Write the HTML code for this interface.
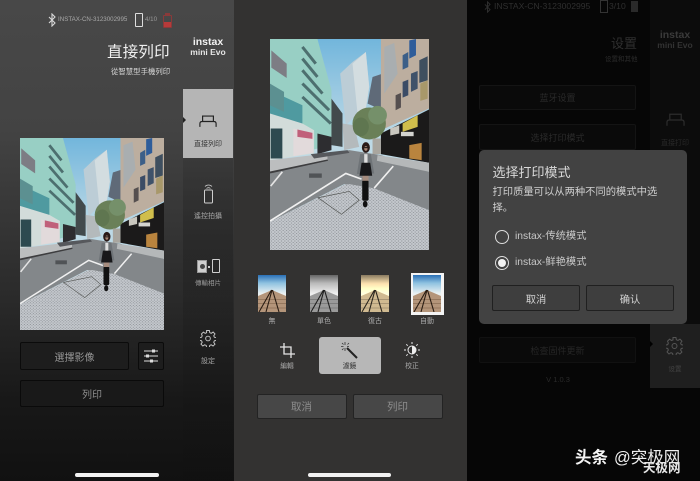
<!DOCTYPE html>
<html lang="zh"><head><meta charset="utf-8">
<style>
*{margin:0;padding:0;box-sizing:border-box}
html,body{width:700px;height:481px;overflow:hidden;background:#000}
body{position:relative;font-family:"Liberation Sans","Noto Sans CJK TC",sans-serif}
#w{position:absolute;left:0;top:0;width:700px;height:481px;filter:blur(.35px)}
.a{position:absolute}
.t{position:absolute;white-space:nowrap;line-height:1}
.c{transform:translateX(-50%)}
.btn{position:absolute;display:flex;align-items:center;justify-content:center;border-radius:2px}
.sc{font-family:"Liberation Sans","Noto Sans CJK SC",sans-serif}
svg{position:absolute;overflow:visible}
</style></head><body>
<svg width="0" height="0" style="position:absolute">
<defs>
<linearGradient id="sky" x1="0" y1="0" x2="0" y2="1"><stop offset="0" stop-color="#72b6dc"/><stop offset=".45" stop-color="#bcd9e6"/><stop offset="1" stop-color="#c9dde4"/></linearGradient>
<linearGradient id="tsky" x1="0" y1="0" x2="0" y2="1"><stop offset="0" stop-color="#2a70b6"/><stop offset=".22" stop-color="#8fc2e0"/><stop offset=".5" stop-color="#eaf1f2"/></linearGradient>
<pattern id="cob" width="10" height="9" patternUnits="userSpaceOnUse"><rect width="10" height="9" fill="#c3c7cc"/><rect x="1" y="2" width="3" height="2" fill="#6a6e73"/><rect x="6" y="6" width="3" height="2" fill="#73777c"/></pattern>
<symbol id="photo" viewBox="108 26 476 634" preserveAspectRatio="none">
<rect x="108" y="26" width="476" height="634" fill="url(#sky)"/>
<polygon points="318,130 355,95 395,65 405,170 395,235 360,260 335,285" fill="#bccdd6"/>
<polygon points="355,100 395,65 405,170 395,235 370,250" fill="#d3dde0"/>
<polygon points="400,220 415,140 445,130 445,240" fill="#5f6a78"/>
<polygon points="108,26 250,26 292,180 292,345 108,390" fill="#98cfc4"/>
<path d="M205 50L245 100M205 85L250 140M205 120L265 190M205 160L285 240M205 200L290 280" stroke="#4d6f6f" stroke-width="9"/>
<polygon points="108,180 205,225 205,300 108,290" fill="#4f9aa0"/>
<polygon points="108,160 150,185 150,245 108,225" fill="#5c9091"/>
<polygon points="108,250 205,280 240,300 240,370 108,390" fill="#d2dcda"/>
<polygon points="110,295 145,295 145,385 110,385" fill="#2d4a50"/>
<polygon points="178,295 238,310 238,368 178,378" fill="#e2dadb"/>
<polygon points="190,298 235,308 235,326 190,320" fill="#c0607a"/>
<polygon points="112,60 158,100 158,143 112,112" fill="#7d7d84"/>
<polygon points="250,310 292,320 292,360 250,372" fill="#2d2d30"/>
<polygon points="292,205 325,250 325,350 292,345" fill="#424a4c"/>
<polygon points="325,280 360,285 375,350 330,360" fill="#b4babc"/>
<polygon points="440,26 584,26 584,235 440,300" fill="#bcae9f"/>
<polygon points="525,30 545,26 545,75 525,85" fill="#2f5d9a"/>
<polygon points="555,90 580,78 580,150 555,158" fill="#3f4f5f"/>
<polygon points="505,75 522,65 522,110 505,118" fill="#3c5f88"/>
<polygon points="530,130 550,122 550,175 530,185" fill="#3f526a"/>
<polygon points="505,155 522,148 522,195 505,202" fill="#3b4c66"/>
<polygon points="558,160 580,150 580,205 558,212" fill="#a8986a"/>
<polygon points="484,195 500,188 500,232 484,240" fill="#554f4f"/>
<polygon points="450,50 480,38 490,130 450,190" fill="#a9aeb0"/>
<polygon points="440,310 584,238 584,398 440,372" fill="#1b1a1a"/>
<polygon points="505,280 550,255 550,290 505,305" fill="#d0be4c"/>
<polygon points="500,305 538,305 538,318 500,318" fill="#d4d4d0"/>
<polygon points="525,345 562,338 562,390 525,385" fill="#b9843e"/>
<polygon points="468,295 495,285 495,310 468,316" fill="#c9c7bf"/>
<ellipse cx="405" cy="280" rx="50" ry="48" fill="#6a8058"/>
<ellipse cx="430" cy="255" rx="28" ry="28" fill="#75906a"/>
<ellipse cx="380" cy="290" rx="24" ry="28" fill="#5f7650"/>
<polygon points="415,325 440,325 440,372 415,372" fill="#a9a69f"/>
<polygon points="108,430 290,372 345,360 440,375 584,425 584,540 420,480 330,462 108,575" fill="#83878a"/>
<polygon points="108,390 280,370 280,388 108,426" fill="#bcbebf"/>
<polygon points="108,424 280,388 282,392 108,430" fill="#3d3d3f"/>
<polygon points="430,375 584,398 584,425 428,392" fill="#b5b8b9"/>
<polygon points="230,372 340,360 346,368 240,385" fill="#56585c"/>
<polygon points="108,575 330,464 345,462 420,475 584,540 584,660 108,660" fill="url(#cob)"/>
<polygon points="252,503 345,484 375,510 322,553" fill="url(#cob)" stroke="#50524f" stroke-width="2"/>
<rect x="225" y="430" width="38" height="13" fill="#505356"/>
<path d="M108 573 L335 430 L382 447" fill="none" stroke="#f0f0f0" stroke-width="5"/>
<path d="M420 474 L477 408" fill="none" stroke="#f0f0f0" stroke-width="5"/>
<path d="M110 468 L145 425" fill="none" stroke="#e4e4e4" stroke-width="5"/>
<rect x="384" y="450" width="19" height="62" rx="5" fill="#111"/>
<ellipse cx="393" cy="522" rx="7" ry="10" fill="#111"/>
<rect x="385" y="432" width="18" height="20" fill="#a58c7e"/>
<polygon points="378,372 410,372 420,430 368,432" fill="#6f7478"/>
<rect x="390" y="372" width="10" height="28" fill="#ddd"/>
<polygon points="382,398 408,398 414,437 376,437" fill="#18181a"/>
<ellipse cx="395" cy="352" rx="12" ry="16" fill="#2a1a18"/>
<ellipse cx="395" cy="355" rx="5" ry="7" fill="#a98877"/>
<rect x="390" y="351" width="10" height="3" fill="#111"/>
</symbol>
<symbol id="thumb" viewBox="0 0 28 37" preserveAspectRatio="none">
<rect width="28" height="37" fill="url(#tsky)"/>
<polygon points="0,21 14,15 28,21 28,37 0,37" fill="#b4957a"/>
<path d="M0 24.500H28M0 28.500H28M0 33H28" stroke="#8c6f56" stroke-width=".8"/>
<path d="M1 37L13.500 15M8 37L14 15M21 37L14.500 15" stroke="#2a1d14" stroke-width="1.100" fill="none"/>
</symbol>
<symbol id="gear" viewBox="0 0 24 24"><path d="M10 1.500h4l.6 3.200 2.200.9 2.700-1.800 2.700 2.800-1.800 2.700.9 2.100 3.200.6v4l-3.200.6-.9 2.200 1.800 2.700-2.800 2.700-2.700-1.800-2.100.9-.6 3.200h-4l-.6-3.200-2.200-.9-2.700 1.800-2.700-2.800 1.800-2.700-.9-2.100-3.200-.6v-4l3.200-.6.9-2.200L2.500 6.600l2.800-2.700L8 5.700l2-.9z" transform="translate(-.4 -1.600) scale(1.030)" fill="none" stroke="currentColor" stroke-width="1.400"/><circle cx="12" cy="12" r="3.500" fill="none" stroke="currentColor" stroke-width="1.400"/></symbol>
<symbol id="printer" viewBox="0 0 20 14"><path d="M4 7V1h12v6M1 13V9.500C1 8 2 7 3.500 7h13C18 7 19 8 19 9.500V13" fill="none" stroke="currentColor" stroke-width="1.300"/></symbol>
<symbol id="bt" viewBox="0 0 8 14"><path d="M1 4l6 6-3 3V1l3 3-6 6" fill="none" stroke="currentColor" stroke-width="1.100"/></symbol>
</defs>
</svg>
<div id="w">
<!-- LEFT PANEL -->
<div class="a" style="left:0;top:0;width:234px;height:481px;background:linear-gradient(#484848 0,#434343 130px,#2a2a2a 300px,#181818 400px,#111 481px)"></div>
<div class="a" style="left:183px;top:0;width:50px;height:481px;background:linear-gradient(rgba(0,0,0,0) 90px,rgba(0,0,0,.18) 230px,rgba(0,0,0,.03) 420px)"></div>
<svg style="left:48px;top:13px;color:#d8d8d8" width="8" height="14"><use href="#bt"/></svg>
<div class="t" style="left:58px;top:17px;font-size:6.200px;color:#a8a8a8">INSTAX-CN-3123002995</div>
<div class="a" style="left:135px;top:13px;width:8px;height:14px;border:1px solid #ddd;border-radius:1px"></div>
<div class="t" style="left:145px;top:17px;font-size:6.200px;color:#999">4/10</div>
<div class="a" style="left:163px;top:15px;width:9px;height:13px;border:1px solid #8a3a3a;border-radius:1px"></div>
<div class="a" style="left:165px;top:13px;width:5px;height:2px;background:#8a3a3a"></div>
<div class="a" style="left:164px;top:22px;width:7px;height:5px;background:#b83a3a"></div>
<div class="t" style="left:107px;top:45px;font-size:15.500px;color:#f0f0f0;letter-spacing:.2px">直接列印</div>
<div class="t" style="left:111px;top:68px;font-size:7.400px;color:#d5d5d5">從智慧型手機列印</div>
<div class="t c" style="left:208px;top:37px;font-size:10.500px;font-weight:bold;color:#f2f2f2">instax</div>
<div class="t c" style="left:208px;top:48px;font-size:8.500px;font-weight:bold;color:#e6e6e6">mini Evo</div>

<svg style="left:19.500px;top:138px" width="144" height="192"><use href="#photo" width="144" height="192"/></svg>

<div class="a" style="left:183px;top:89px;width:50px;height:69px;background:#b5b5b5"></div>
<div class="a" style="left:183px;top:117px;border-left:3px solid #222;border-top:3px solid transparent;border-bottom:3px solid transparent"></div>
<svg style="left:199px;top:115px;color:#222" width="18" height="13"><use href="#printer" width="18" height="13"/></svg>
<div class="t c" style="left:208px;top:140.500px;font-size:7px;color:#333">直接列印</div>

<svg style="left:203px;top:183px;color:#cfcfcf" width="11" height="21" viewBox="0 0 11 21"><path d="M2 3.500C4 1.500 7 1.500 9 3.500M3.500 5.500C4.700 4.500 6.300 4.500 7.500 5.500" fill="none" stroke="currentColor" stroke-width=".8"/><rect x="1.500" y="7" width="8" height="13" rx="1" fill="none" stroke="currentColor"/></svg>
<div class="t c" style="left:208px;top:213px;font-size:7px;color:#a5a5a5">遙控拍攝</div>
<div class="a" style="left:197px;top:260px;width:10px;height:13px;background:#cfcfcf;border:1px solid #999"></div>
<div class="a" style="left:199.500px;top:264px;width:5px;height:5px;border-radius:50%;background:#444"></div>
<div class="a" style="left:208px;top:266px;width:2px;height:2px;background:#ccc"></div>
<div class="a" style="left:212px;top:259px;width:8px;height:14px;border:1px solid #cfcfcf;border-radius:1px"></div>
<div class="t c" style="left:208px;top:281px;font-size:6.500px;color:#9a9a9a">傳輸相片</div>
<svg style="left:200px;top:330px;color:#c8c8c8" width="16" height="17"><use href="#gear" width="16" height="17"/></svg>
<div class="t c" style="left:208px;top:358px;font-size:7px;color:#a5a5a5">設定</div>

<div class="btn" style="left:20px;top:342px;width:109px;height:28px;background:#1d1d1d;border:1px solid #0b0b0b;color:#979797;font-size:10px">選擇影像</div>
<div class="btn" style="left:138px;top:342px;width:26px;height:28px;background:#1d1d1d;border:1px solid #0b0b0b"></div>
<svg style="left:143px;top:348px" width="16" height="16" viewBox="0 0 16 16"><path d="M1 3h14M1 8h14M1 13h14" stroke="#ddd" stroke-width="1"/><rect x="9" y="1.500" width="3" height="3" fill="#ddd"/><rect x="3" y="6.500" width="3" height="3" fill="#ddd"/><rect x="7" y="11.500" width="3" height="3" fill="#ddd"/></svg>
<div class="btn" style="left:20px;top:380px;width:144px;height:27px;background:#191919;border:1px solid #0a0a0a;color:#8c8c8c;font-size:10px">列印</div>
<div class="a" style="left:75px;top:473px;width:84px;height:4px;border-radius:2px;background:#f2f2f2"></div>

<!-- MIDDLE PANEL -->
<div class="a" style="left:234px;top:0;width:233px;height:481px;background:#333231"></div>
<svg style="left:270px;top:39px" width="159" height="211"><use href="#photo" width="159" height="211"/></svg>
<svg style="left:258px;top:275px" width="28" height="37"><use href="#thumb" width="28" height="37"/></svg>
<svg style="left:310px;top:275px;filter:grayscale(1)" width="28" height="37"><use href="#thumb" width="28" height="37"/></svg>
<svg style="left:361px;top:275px;filter:sepia(1)" width="28" height="37"><use href="#thumb" width="28" height="37"/></svg>
<div class="a" style="left:410.500px;top:272.500px;width:33px;height:42px;background:#f4f4f4"></div>
<svg style="left:413px;top:275px" width="28" height="37"><use href="#thumb" width="28" height="37"/></svg>
<div class="t c" style="left:272px;top:318px;font-size:7px;color:#aaa">無</div>
<div class="t c" style="left:324px;top:318px;font-size:7px;color:#aaa">單色</div>
<div class="t c" style="left:375px;top:318px;font-size:7px;color:#aaa">復古</div>
<div class="t c" style="left:427px;top:318px;font-size:7px;color:#aaa">自動</div>

<svg style="left:280px;top:343px" width="15" height="15" viewBox="0 0 15 15"><path d="M4 0v11h11M0 4h11v11" fill="none" stroke="#e6e6e6" stroke-width="1.300"/></svg>
<div class="t c" style="left:287px;top:364px;font-size:6.800px;color:#aaa">編輯</div>
<div class="a" style="left:318.500px;top:337px;width:62.500px;height:37px;border-radius:3px;background:#b7b7b7"></div>
<svg style="left:341px;top:342px" width="17" height="17" viewBox="0 0 17 17"><path d="M6 6l10 10" stroke="#222" stroke-width="2"/><path d="M4 0v3M4 6v3M0 4.500h2.500M6 4.500h2M8 1L6.500 2.500M1 1l1.500 1.500M1 8l1.500-1.500" stroke="#333" stroke-width=".8"/></svg>
<div class="t c" style="left:349.500px;top:364px;font-size:6.800px;color:#333">濾鏡</div>
<svg style="left:404px;top:342px" width="16" height="16" viewBox="0 0 16 16"><circle cx="8" cy="8" r="4" fill="none" stroke="#eee" stroke-width="1"/><path d="M8 4a4 4 0 0 1 0 8z" fill="#eee"/><path d="M8 0v2M8 14v2M0 8h2M14 8h2M2.300 2.300l1.400 1.400M12.300 12.300l1.400 1.400M2.300 13.700l1.400-1.400M12.300 3.700l1.400-1.400" stroke="#eee" stroke-width="1"/></svg>
<div class="t c" style="left:412px;top:364px;font-size:6.800px;color:#aaa">校正</div>

<div class="btn" style="left:256.500px;top:394px;width:90px;height:25px;background:#474747;border:1px solid #232323;color:#8e8e8e;font-size:10.500px">取消</div>
<div class="btn" style="left:352.500px;top:394px;width:90px;height:25px;background:#474747;border:1px solid #232323;color:#8e8e8e;font-size:10.500px">列印</div>
<div class="a" style="left:308px;top:473px;width:83px;height:4px;border-radius:2px;background:#f2f2f2"></div>

<!-- RIGHT PANEL -->
<div class="a sc" style="left:467px;top:0;width:233px;height:481px;background:#060606"></div>
<div class="a" style="left:650px;top:0;width:50px;height:325px;background:#0c0c0c"></div>
<svg style="left:484px;top:1px;color:#303030" width="7" height="12"><use href="#bt"/></svg>
<div class="t sc" style="left:494px;top:2px;font-size:8.600px;color:#2f2f2f">INSTAX-CN-3123002995</div>
<div class="a" style="left:600px;top:0;width:8px;height:13px;border:1px solid #333"></div>
<div class="t sc" style="left:609px;top:2px;font-size:8.600px;color:#2f2f2f">3/10</div>
<div class="a" style="left:631px;top:1px;width:7px;height:11px;background:#2a2a2a"></div>
<div class="t sc" style="left:611px;top:37px;font-size:13px;color:#2f2f2f">设置</div>
<div class="t sc" style="left:605px;top:57px;font-size:6.500px;color:#2c2c2c">设置和其他</div>
<div class="t c" style="left:675px;top:30px;font-size:10.500px;font-weight:bold;color:#3a3a3a">instax</div>
<div class="t c" style="left:675px;top:41px;font-size:8.500px;font-weight:bold;color:#333">mini Evo</div>
<div class="btn sc" style="left:479px;top:85px;width:157px;height:25px;background:#0a0a0a;border:1px solid #141414;color:#2a2a2a;font-size:9px">蓝牙设置</div>
<div class="btn sc" style="left:479px;top:124px;width:157px;height:26px;background:#0a0a0a;border:1px solid #141414;color:#2a2a2a;font-size:9px">选择打印模式</div>
<div class="btn sc" style="left:479px;top:337px;width:157px;height:26px;background:#0a0a0a;border:1px solid #111;color:#262626;font-size:9px">检查固件更新</div>
<div class="t c sc" style="left:558px;top:376px;font-size:7.500px;color:#2a2a2a">V 1.0.3</div>
<svg style="left:666px;top:113px;color:#2c2c2c" width="19" height="14"><use href="#printer" width="19" height="14"/></svg>
<div class="t c sc" style="left:675px;top:140px;font-size:7px;color:#2a2a2a">直接打印</div>
<div class="a" style="left:650px;top:324px;width:50px;height:64px;background:#1f1f1f"></div>
<div class="a" style="left:650px;top:341px;border-left:3px solid #000;border-top:3px solid transparent;border-bottom:3px solid transparent"></div>
<svg style="left:666px;top:337px;color:#555" width="17" height="18"><use href="#gear" width="17" height="18"/></svg>
<div class="t c sc" style="left:675px;top:367px;font-size:6.500px;color:#444">设置</div>

<div class="a" style="left:479px;top:150px;width:208px;height:174px;border-radius:5px;background:#424242"></div>
<div class="t sc" style="left:492.500px;top:166px;font-size:13px;color:#d8d8d8">选择打印模式</div>
<div class="t sc" style="left:492.500px;top:188px;font-size:10.300px;color:#cfcfcf">打印质量可以从两种不同的模式中选</div>
<div class="t sc" style="left:492.500px;top:204px;font-size:10.300px;color:#cfcfcf">择。</div>
<div class="a" style="left:495px;top:230px;width:14px;height:14px;border-radius:50%;border:1.300px solid #ddd"></div>
<div class="t sc" style="left:515px;top:231.500px;font-size:10.300px;color:#c8c8c8">instax-传统模式</div>
<div class="a" style="left:495px;top:256px;width:14px;height:14px;border-radius:50%;border:1.300px solid #ddd"></div>
<div class="a" style="left:498px;top:259px;width:8px;height:8px;border-radius:50%;background:#f2f2f2"></div>
<div class="t sc" style="left:515px;top:257.500px;font-size:10.300px;color:#c8c8c8">instax-鲜艳模式</div>
<div class="btn sc" style="left:492px;top:285px;width:88px;height:26px;background:#3e3e3e;border:1px solid #202020;color:#d2d2d2;font-size:10.300px">取消</div>
<div class="btn sc" style="left:586px;top:285px;width:88px;height:26px;background:#3e3e3e;border:1px solid #202020;color:#d2d2d2;font-size:10.300px">确认</div>

<div class="t sc" style="left:575px;top:450px;font-size:16.500px;font-weight:bold;color:#f5f5f5">头条</div>
<div class="t sc" style="left:614px;top:450px;font-size:16.500px;color:#eee">@突极网</div>
<div class="t sc" style="left:643px;top:462px;font-size:12.500px;font-weight:bold;color:#e6e6e6">天极网</div>
</div>
</body></html>
